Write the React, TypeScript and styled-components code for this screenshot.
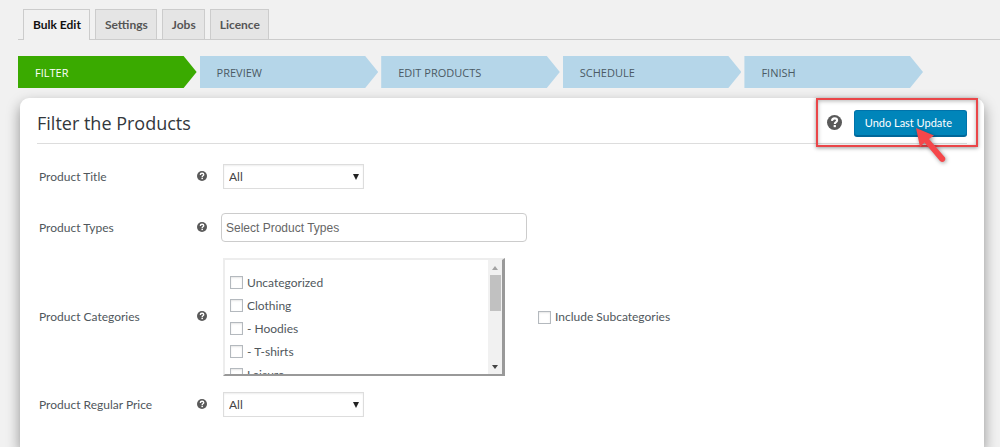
import React from "react";
import styled, { createGlobalStyle } from "styled-components";

const displayFont = `"Open Sans", "Noto Sans", sans-serif`;

const GlobalStyle = createGlobalStyle`
  *, *::before, *::after { box-sizing: border-box; }
  body {
    margin: 0;
    background: #f1f1f1;
    color: #50575c;
    font: 12px/20px Lato, "Open Sans", sans-serif;
  }
  button, select, input { font: inherit; }
`;

const Page = styled.div`
  display: flow-root;
  min-height: 100vh;
`;

const Tabs = styled.nav`
  display: flex;
  gap: 5px;
  margin: 9px 0 0 18px;
  padding-left: 5px;
  border-bottom: 1px solid #ccc;
`;

const Tab = styled.a<{ $active?: boolean }>`
  height: ${(p) => (p.$active ? 31 : 30)}px;
  margin-bottom: ${(p) => (p.$active ? -1 : 0)}px;
  padding: 0 8px 0 9px;
  border: 1px solid #ccc;
  border-bottom: 0;
  background: ${(p) => (p.$active ? "#f1f1f1" : "#e5e5e5")};
  color: ${(p) => (p.$active ? "#111" : "#555")};
  font-weight: 700;
  line-height: 30px;
  text-decoration: none;
`;

const Steps = styled.ol`
  display: grid;
  grid-template-columns: repeat(5, 1fr);
  gap: 3px;
  width: calc(100% - 95px);
  margin: 16px 0 10px 18px;
  padding: 0;
  list-style: none;
`;

const Step = styled.li<{ $active?: boolean }>`
  padding: 1px 17px 0;
  background: ${(p) => (p.$active ? "#3aaa00" : "#b5d6e9")};
  color: ${(p) => (p.$active ? "#fff" : "#4b5a64")};
  font: 11px/31px ${displayFont};
  clip-path: polygon(0 0, calc(100% - 13px) 0, 100% 50%, calc(100% - 13px) 100%, 0 100%);
`;

const Panel = styled.main`
  margin: 0 16px 0 20px;
  padding: 0 17px 6px;
  border-radius: 9px 9px 0 0;
  background: #fff;
  box-shadow: 0 6px 14px rgba(0, 0, 0, 0.4);
`;

const PanelHeader = styled.header`
  display: flex;
  align-items: center;
  justify-content: space-between;
  height: 46px;
  padding-top: 4px;
  border-bottom: 1px solid #ddd;
`;

const Title = styled.h1`
  margin: 0;
  color: #32373c;
  font: 400 18px/24px ${displayFont};
`;

const Actions = styled.div`
  position: relative;
  display: flex;
  align-items: center;
  gap: 12px;
`;

const PrimaryButton = styled.button`
  height: 26px;
  padding: 0 14px 0 10px;
  border: 1px solid #0073aa;
  border-bottom-color: #006799;
  border-radius: 3px;
  background: #0085ba;
  box-shadow: 0 1px 0 #006799;
  color: #fff;
  font-size: 11px;
`;

const Highlight = styled.div`
  position: absolute;
  inset: -12px -11px -11px;
  border: 2px solid #ea4649;
  box-shadow: 0 1px 4px rgba(0, 0, 0, 0.4), inset 0 1px 4px rgba(0, 0, 0, 0.3);
  pointer-events: none;
`;

const Pointer = styled.svg`
  position: absolute;
  top: 16px;
  right: 20px;
  filter: drop-shadow(1px 1px 2px rgba(0, 0, 0, 0.4));
  pointer-events: none;
`;

const Form = styled.form`
  display: grid;
  grid-template-columns: 158px 26px 1fr;
  align-items: center;
  padding: 20px 0 0 2px;

  & > svg { margin-bottom: 2px; }
`;

const Control = styled.div<{ $height: number }>`
  display: flex;
  align-items: center;
  gap: 33px;
  height: ${(p) => p.$height}px;
`;

const HelpSvg = styled.svg`
  display: block;
  flex: none;
`;

const SelectBox = styled.div`
  display: grid;
  align-items: center;
  width: 141px;

  & > * { grid-area: 1 / 1; }
  & > svg { justify-self: end; margin-right: 5px; pointer-events: none; }
`;

const Select = styled.select`
  width: 100%;
  height: 25px;
  padding: 1px 5px 0;
  border: 1px solid #ddd;
  border-radius: 0;
  background: #fff;
  box-shadow: inset 0 1px 2px rgba(0, 0, 0, 0.07);
  color: #444;
  appearance: none;
`;

const TextInput = styled.input`
  width: 306px;
  height: 29px;
  margin-left: -2px;
  padding: 0 4px;
  border: 1px solid #ccc;
  border-radius: 4px;
  font: 12px/20px "Liberation Sans", Arial, sans-serif;

  &::placeholder { color: #666; opacity: 1; }
`;

const CategoryBox = styled.div`
  display: flex;
  width: 282px;
  height: 118px;
  border: solid;
  border-width: 2px 3px 2px 2px;
  border-color: #ededed #999 #999 #ededed;
`;

const CategoryList = styled.div`
  flex: 1;
  overflow: hidden;
  padding: 11px 0 0 5px;
`;

const CheckLabel = styled.label`
  display: flex;
  align-items: center;
  gap: 4px;
  height: 23px;
`;

const Checkbox = styled.input`
  flex: none;
  width: 13px;
  height: 13px;
  margin: 0;
  border: 1px solid #b4b9be;
  background: #fff;
  box-shadow: inset 0 1px 2px rgba(0, 0, 0, 0.1);
  appearance: none;
`;

const Scrollbar = styled.div`
  display: flex;
  flex-direction: column;
  align-items: center;
  width: 14px;
  padding: 6px 0 5px;
  background: #f1f1f1;
`;

const Thumb = styled.div`
  flex: none;
  width: 11px;
  height: 36px;
  margin: 5px 0 auto;
  background: #c1c1c1;
`;

function HelpIcon({ size }: { size: number }) {
  return (
    <HelpSvg width={size} height={size} viewBox="0 0 16 16" role="img" aria-label="Help">
      <circle cx="8" cy="8" r="8" fill="#5a5a5a" />
      <path d="M5.3 6.300C5.400 4.500 6.500 3.600 8.100 3.600c1.700 0 2.700.9 2.700 2.200 0 1.800-2.500 1.700-2.500 3.700" fill="none" stroke="#fff" strokeWidth="2.200" />
      <rect x="7.100" y="10.700" width="2.400" height="2.300" fill="#fff" />
    </HelpSvg>
  );
}

function AllSelect({ id }: { id: string }) {
  return (
    <SelectBox>
      <Select id={id}>
        <option>All</option>
      </Select>
      <svg width="6" height="6" viewBox="0 0 6 6" aria-hidden="true">
        <path d="M0 0h6L3 6z" fill="#222" />
      </svg>
    </SelectBox>
  );
}

function Check({ text }: { text: string }) {
  return (
    <CheckLabel>
      <Checkbox type="checkbox" />
      {text}
    </CheckLabel>
  );
}

const tabs = ["Bulk Edit", "Settings", "Jobs", "Licence"];
const steps = ["FILTER", "PREVIEW", "EDIT PRODUCTS", "SCHEDULE", "FINISH"];
const categories = ["Uncategorized", "Clothing", "- Hoodies", "- T-shirts", "Leisure"];

export default function App() {
  return (
    <Page>
      <GlobalStyle />
      <Tabs>
        {tabs.map((name, i) => (
          <Tab key={name} href="#" $active={i === 0}>{name}</Tab>
        ))}
      </Tabs>
      <Steps>
        {steps.map((name, i) => (
          <Step key={name} $active={i === 0}>{name}</Step>
        ))}
      </Steps>
      <Panel>
        <PanelHeader>
          <Title>Filter the Products</Title>
          <Actions>
            <HelpIcon size={15} />
            <PrimaryButton type="button">Undo Last Update</PrimaryButton>
            <Highlight />
            <Pointer width="32" height="38" viewBox="0 0 32 38" aria-hidden="true">
              <path d="M1 2L19 9.500L14 13L30 31.500Q31 34 29 35.500Q27 36.500 25 35L9.500 16.500L5 21Z" fill="#f5474a" />
            </Pointer>
          </Actions>
        </PanelHeader>
        <Form>
          <label htmlFor="title">Product Title</label>
          <HelpIcon size={10} />
          <Control $height={25}>
            <AllSelect id="title" />
          </Control>

          <label htmlFor="types">Product Types</label>
          <HelpIcon size={10} />
          <Control $height={77}>
            <TextInput id="types" placeholder="Select Product Types" />
          </Control>

          <span id="categories">Product Categories</span>
          <HelpIcon size={10} />
          <Control $height={102}>
            <CategoryBox role="group" aria-labelledby="categories">
              <CategoryList>
                {categories.map((name) => (
                  <Check key={name} text={name} />
                ))}
              </CategoryList>
              <Scrollbar aria-hidden="true">
                <svg width="6" height="4" viewBox="0 0 6 4">
                  <path d="M0 4h6L3 0z" fill="#a3a3a3" />
                </svg>
                <Thumb />
                <svg width="6" height="4" viewBox="0 0 6 4">
                  <path d="M0 0h6L3 4z" fill="#444" />
                </svg>
              </Scrollbar>
            </CategoryBox>
            <Check text="Include Subcategories" />
          </Control>

          <label htmlFor="price">Product Regular Price</label>
          <HelpIcon size={10} />
          <Control $height={73}>
            <AllSelect id="price" />
          </Control>
        </Form>
      </Panel>
    </Page>
  );
}
